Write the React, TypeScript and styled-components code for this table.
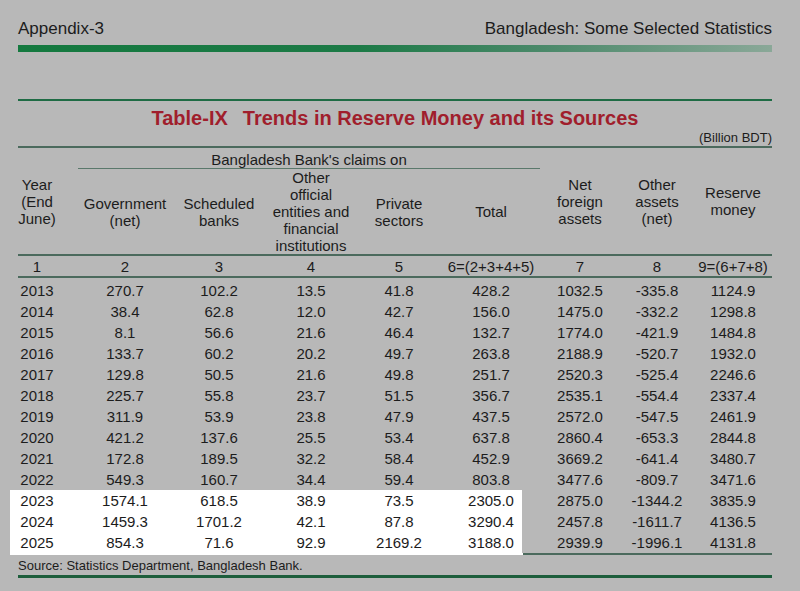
import styled, { createGlobalStyle } from 'styled-components';

const rule = '#4b6a5d';

const GlobalStyle = createGlobalStyle`
  html, body {
    margin: 0;
    padding: 0;
    background: #b8b8b8;
  }
  body {
    font-family: "Liberation Sans", Arial, sans-serif;
    color: #1c1c1c;
  }
`;

const Page = styled.div`
  width: 754px;
  padding: 19px 18px 12px;
`;

const TopBar = styled.header`
  display: flex;
  justify-content: space-between;
  font-size: 17px;
  line-height: 20px;
`;

const ThickRule = styled.div`
  height: 7px;
  margin-top: 6px;
  background: linear-gradient(to right, #14793f 0%, #1c7a46 45%, #4b896a 70%, #8aa898 100%);
`;

const ThinRule = styled.div<{ $top: number; $size: number; $color: string }>`
  height: ${p => p.$size}px;
  margin-top: ${p => p.$top}px;
  background: ${p => p.$color};
`;

const Title = styled.h1`
  display: flex;
  justify-content: center;
  gap: 15px;
  margin: 5px 0 0;
  font-size: 20px;
  line-height: 24px;
  font-weight: bold;
  color: #a01e2c;
`;

const Unit = styled.div`
  text-align: right;
  font-size: 13px;
  line-height: 16px;
  border-bottom: 2px solid ${rule};
`;

const Table = styled.table`
  width: 754px;
  table-layout: fixed;
  border-collapse: separate;
  border-spacing: 0;
  font-size: 15px;
`;

const HeadCell = styled.th<{ $year?: boolean }>`
  padding: 0;
  padding-right: ${p => (p.$year ? 22 : 0)}px;
  font-weight: normal;
  line-height: 17px;
  text-align: center;
  vertical-align: middle;
  white-space: nowrap;
  border-bottom: 2px solid ${rule};
`;

const ClaimsCell = styled.th`
  padding: 3px 0 0;
  font-weight: normal;
  line-height: 17px;
  text-align: center;
  white-space: nowrap;
  border-bottom: 1.5px solid #5a786b;
`;

const IndexCell = styled.td<{ $year?: boolean }>`
  padding: 2px ${p => (p.$year ? 22 : 0)}px 0 0;
  line-height: 18px;
  text-align: center;
  white-space: nowrap;
  border-bottom: 2px solid ${rule};
`;

type Mark = 'fill' | 'start' | 'end';

const DataCell = styled.td<{ $mark?: Mark; $year?: boolean; $top?: boolean; $closing?: boolean }>`
  padding: ${p => (p.$top ? 2 : 0)}px ${p => (p.$year ? 22 : 0)}px 0 0;
  line-height: 21px;
  text-align: center;
  white-space: nowrap;
  ${p => p.$mark === 'fill' && 'background: #fff;'}
  ${p => p.$mark === 'start' && 'background: #fff; box-shadow: -8px 0 0 #fff;'}
  ${p => p.$mark === 'end' && 'background: linear-gradient(to right, #fff 80px, transparent 80px);'}
  ${p => p.$closing && `border-bottom: 2px solid ${p.$mark && p.$mark !== 'end' ? '#fff' : rule};`}
  ${p => p.$closing && p.$mark === 'end' && `border-image: linear-gradient(to right, #fff 80px, ${rule} 80px) 1;`}
`;

const Source = styled.p`
  margin: 1px 0 0;
  font-size: 13px;
  line-height: 19px;
`;

const widths = [60, 94, 94, 90, 86, 98, 80, 74, 78];

const rows: string[][] = [
  ['2013', '270.7', '102.2', '13.5', '41.8', '428.2', '1032.5', '-335.8', '1124.9'],
  ['2014', '38.4', '62.8', '12.0', '42.7', '156.0', '1475.0', '-332.2', '1298.8'],
  ['2015', '8.1', '56.6', '21.6', '46.4', '132.7', '1774.0', '-421.9', '1484.8'],
  ['2016', '133.7', '60.2', '20.2', '49.7', '263.8', '2188.9', '-520.7', '1932.0'],
  ['2017', '129.8', '50.5', '21.6', '49.8', '251.7', '2520.3', '-525.4', '2246.6'],
  ['2018', '225.7', '55.8', '23.7', '51.5', '356.7', '2535.1', '-554.4', '2337.4'],
  ['2019', '311.9', '53.9', '23.8', '47.9', '437.5', '2572.0', '-547.5', '2461.9'],
  ['2020', '421.2', '137.6', '25.5', '53.4', '637.8', '2860.4', '-653.3', '2844.8'],
  ['2021', '172.8', '189.5', '32.2', '58.4', '452.9', '3669.2', '-641.4', '3480.7'],
  ['2022', '549.3', '160.7', '34.4', '59.4', '803.8', '3477.6', '-809.7', '3471.6'],
  ['2023', '1574.1', '618.5', '38.9', '73.5', '2305.0', '2875.0', '-1344.2', '3835.9'],
  ['2024', '1459.3', '1701.2', '42.1', '87.8', '3290.4', '2457.8', '-1611.7', '4136.5'],
  ['2025', '854.3', '71.6', '92.9', '2169.2', '3188.0', '2939.9', '-1996.1', '4131.8']
];

const highlighted = ['2023', '2024', '2025'];

const indexLabels = ['1', '2', '3', '4', '5', '6=(2+3+4+5)', '7', '8', '9=(6+7+8)'];

const markFor = (row: string[], col: number): Mark | undefined => {
  if (!highlighted.includes(row[0]) || col > 5) return undefined;
  if (col === 0) return 'start';
  if (col === 5) return 'end';
  return 'fill';
};

const App = (): JSX.Element => (
  <>
    <GlobalStyle />
    <Page>
      <TopBar>
        <span>Appendix-3</span>
        <span>Bangladesh: Some Selected Statistics</span>
      </TopBar>
      <ThickRule />
      <ThinRule $top={47} $size={2} $color="#1e6b44" />
      <Title>
        <span>Table-IX</span>
        <span>Trends in Reserve Money and its Sources</span>
      </Title>
      <Unit>(Billion BDT)</Unit>
      <Table>
        <colgroup>
          {widths.map((w, i) => <col key={i} style={{ width: w }} />)}
        </colgroup>
        <thead>
          <tr>
            <HeadCell rowSpan={2} $year>Year<br />(End<br />June)</HeadCell>
            <ClaimsCell colSpan={5}>Bangladesh Bank&apos;s claims on</ClaimsCell>
            <HeadCell rowSpan={2}>Net<br />foreign<br />assets</HeadCell>
            <HeadCell rowSpan={2}>Other<br />assets<br />(net)</HeadCell>
            <HeadCell rowSpan={2}>Reserve<br />money</HeadCell>
          </tr>
          <tr>
            <HeadCell>Government<br />(net)</HeadCell>
            <HeadCell>Scheduled<br />banks</HeadCell>
            <HeadCell>Other<br />official<br />entities and<br />financial<br />institutions</HeadCell>
            <HeadCell>Private<br />sectors</HeadCell>
            <HeadCell>Total</HeadCell>
          </tr>
          <tr>
            {indexLabels.map((label, i) => (
              <IndexCell key={label} $year={i === 0}>{label}</IndexCell>
            ))}
          </tr>
        </thead>
        <tbody>
          {rows.map((row, r) => (
            <tr key={row[0]}>
              {row.map((value, c) => (
                <DataCell
                  key={c}
                  $year={c === 0}
                  $top={r === 0}
                  $closing={r === rows.length - 1}
                  $mark={markFor(row, c)}
                >
                  {value}
                </DataCell>
              ))}
            </tr>
          ))}
        </tbody>
      </Table>
      <Source>Source: Statistics Department, Bangladesh Bank.</Source>
      <ThinRule $top={0} $size={3} $color="#1d5e3c" />
    </Page>
  </>
);

export default App;
